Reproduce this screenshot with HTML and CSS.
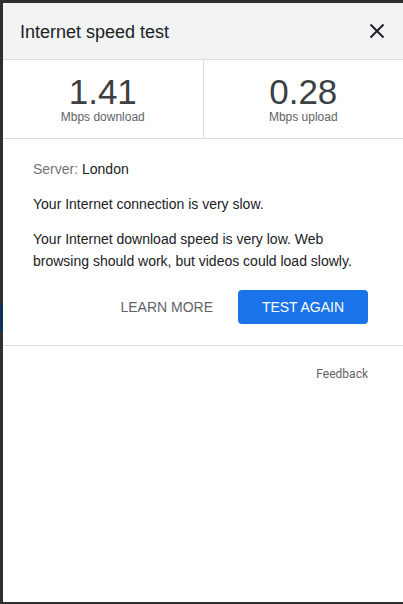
FILE: index.html
```html
<!DOCTYPE html>
<html lang="en">
<head>
<meta charset="utf-8">
<title>Internet speed test</title>
<link rel="stylesheet" href="styles.css">
</head>
<body>
<div class="frame">
  <div class="edge"><span class="e1"></span><span class="e2"></span><span class="e3"></span></div>
  <div class="panel">
    <header class="head">
      <h1 class="title">Internet speed test</h1>
      <button class="close" aria-label="Close">
        <svg width="16" height="16" viewBox="0 0 16 16"><path d="M1.5 1.5L14.5 14.5M14.5 1.5L1.5 14.5" stroke="#202124" stroke-width="2" fill="none"/></svg>
      </button>
    </header>
    <section class="stats">
      <div class="stat">
        <div class="num">1.41</div>
        <div class="unit">Mbps download</div>
      </div>
      <div class="stat">
        <div class="num">0.28</div>
        <div class="unit">Mbps upload</div>
      </div>
    </section>
    <section class="body">
      <p class="server"><span class="lbl">Server:</span> London</p>
      <p class="msg">Your Internet connection is very slow.</p>
      <p class="msg long">Your Internet download speed is very low. Web browsing should work, but videos could load slowly.</p>
      <div class="actions">
        <button class="learn">LEARN MORE</button>
        <button class="again">TEST AGAIN</button>
      </div>
    </section>
    <footer class="foot">
      <a class="feedback">Feedback</a>
    </footer>
  </div>
</div>
</body>
</html>
```

FILE: styles.css
```css
* { box-sizing: border-box; }
html, body { margin: 0; padding: 0; }
body {
  background: #2f2f2f;
  width: 403px;
  height: 604px;
  overflow: hidden;
  font-family: "Liberation Sans", Arial, sans-serif;
}
.frame {
  display: flex;
  height: 602px;
  padding-top: 3px;
}
.edge {
  width: 3px;
  flex: none;
  display: flex;
  flex-direction: column;
}
.edge span { display: block; }
.e1 { height: 300px; }
.e2 { height: 28px; background: #0d3256; }
.panel {
  flex: 1;
  background: #fff;
  display: flex;
  flex-direction: column;
}
.head {
  height: 57px;
  background: #f1f3f4;
  border-bottom: 1px solid #dadce0;
  display: flex;
  align-items: center;
  justify-content: space-between;
  padding: 0 16px 0 17px;
}
.title {
  margin: 0;
  font-weight: normal;
  font-size: 18px;
  color: #202124;
  padding-top: 2px;
}
.close {
  border: 0;
  background: none;
  padding: 0;
  width: 20px;
  height: 20px;
  display: flex;
  align-items: center;
  justify-content: center;
}
.stats {
  display: flex;
  height: 79px;
  border-bottom: 1px solid #dadce0;
}
.stat {
  flex: 1;
  display: flex;
  flex-direction: column;
  align-items: center;
  padding-top: 12px;
}
.stat + .stat { border-left: 1px solid #dadce0; }
.num {
  font-size: 35px;
  line-height: 39px;
  color: #3c4043;
}
.unit {
  font-size: 12px;
  line-height: 14px;
  color: #5f6368;
  margin-top: -1px;
}
.body {
  padding: 19px 35px 21px 30px;
  border-bottom: 1px solid #dadce0;
}
.body p {
  margin: 0;
  font-size: 14px;
  line-height: 22px;
  color: #202124;
}
.lbl { color: #70757a; }
.server { margin-bottom: 13px !important; }
.msg { margin-bottom: 13px !important; }
.long { margin-bottom: 0 !important; }
.actions {
  display: flex;
  justify-content: flex-end;
  align-items: center;
  gap: 25px;
  margin-top: 18px;
}
.learn {
  border: 0;
  background: none;
  padding: 0;
  font-family: inherit;
  font-size: 14px;
  color: #5f6368;
}
.again {
  border: 0;
  background: #1a73e8;
  color: #fff;
  font-family: inherit;
  font-size: 14px;
  width: 130px;
  height: 34px;
  border-radius: 4px;
}
.foot {
  display: flex;
  justify-content: flex-end;
  padding: 21px 35px 0 0;
}
.feedback {
  font-family: Roboto, "Liberation Sans", sans-serif;
  font-size: 12px;
  color: #5f6368;
}
```
